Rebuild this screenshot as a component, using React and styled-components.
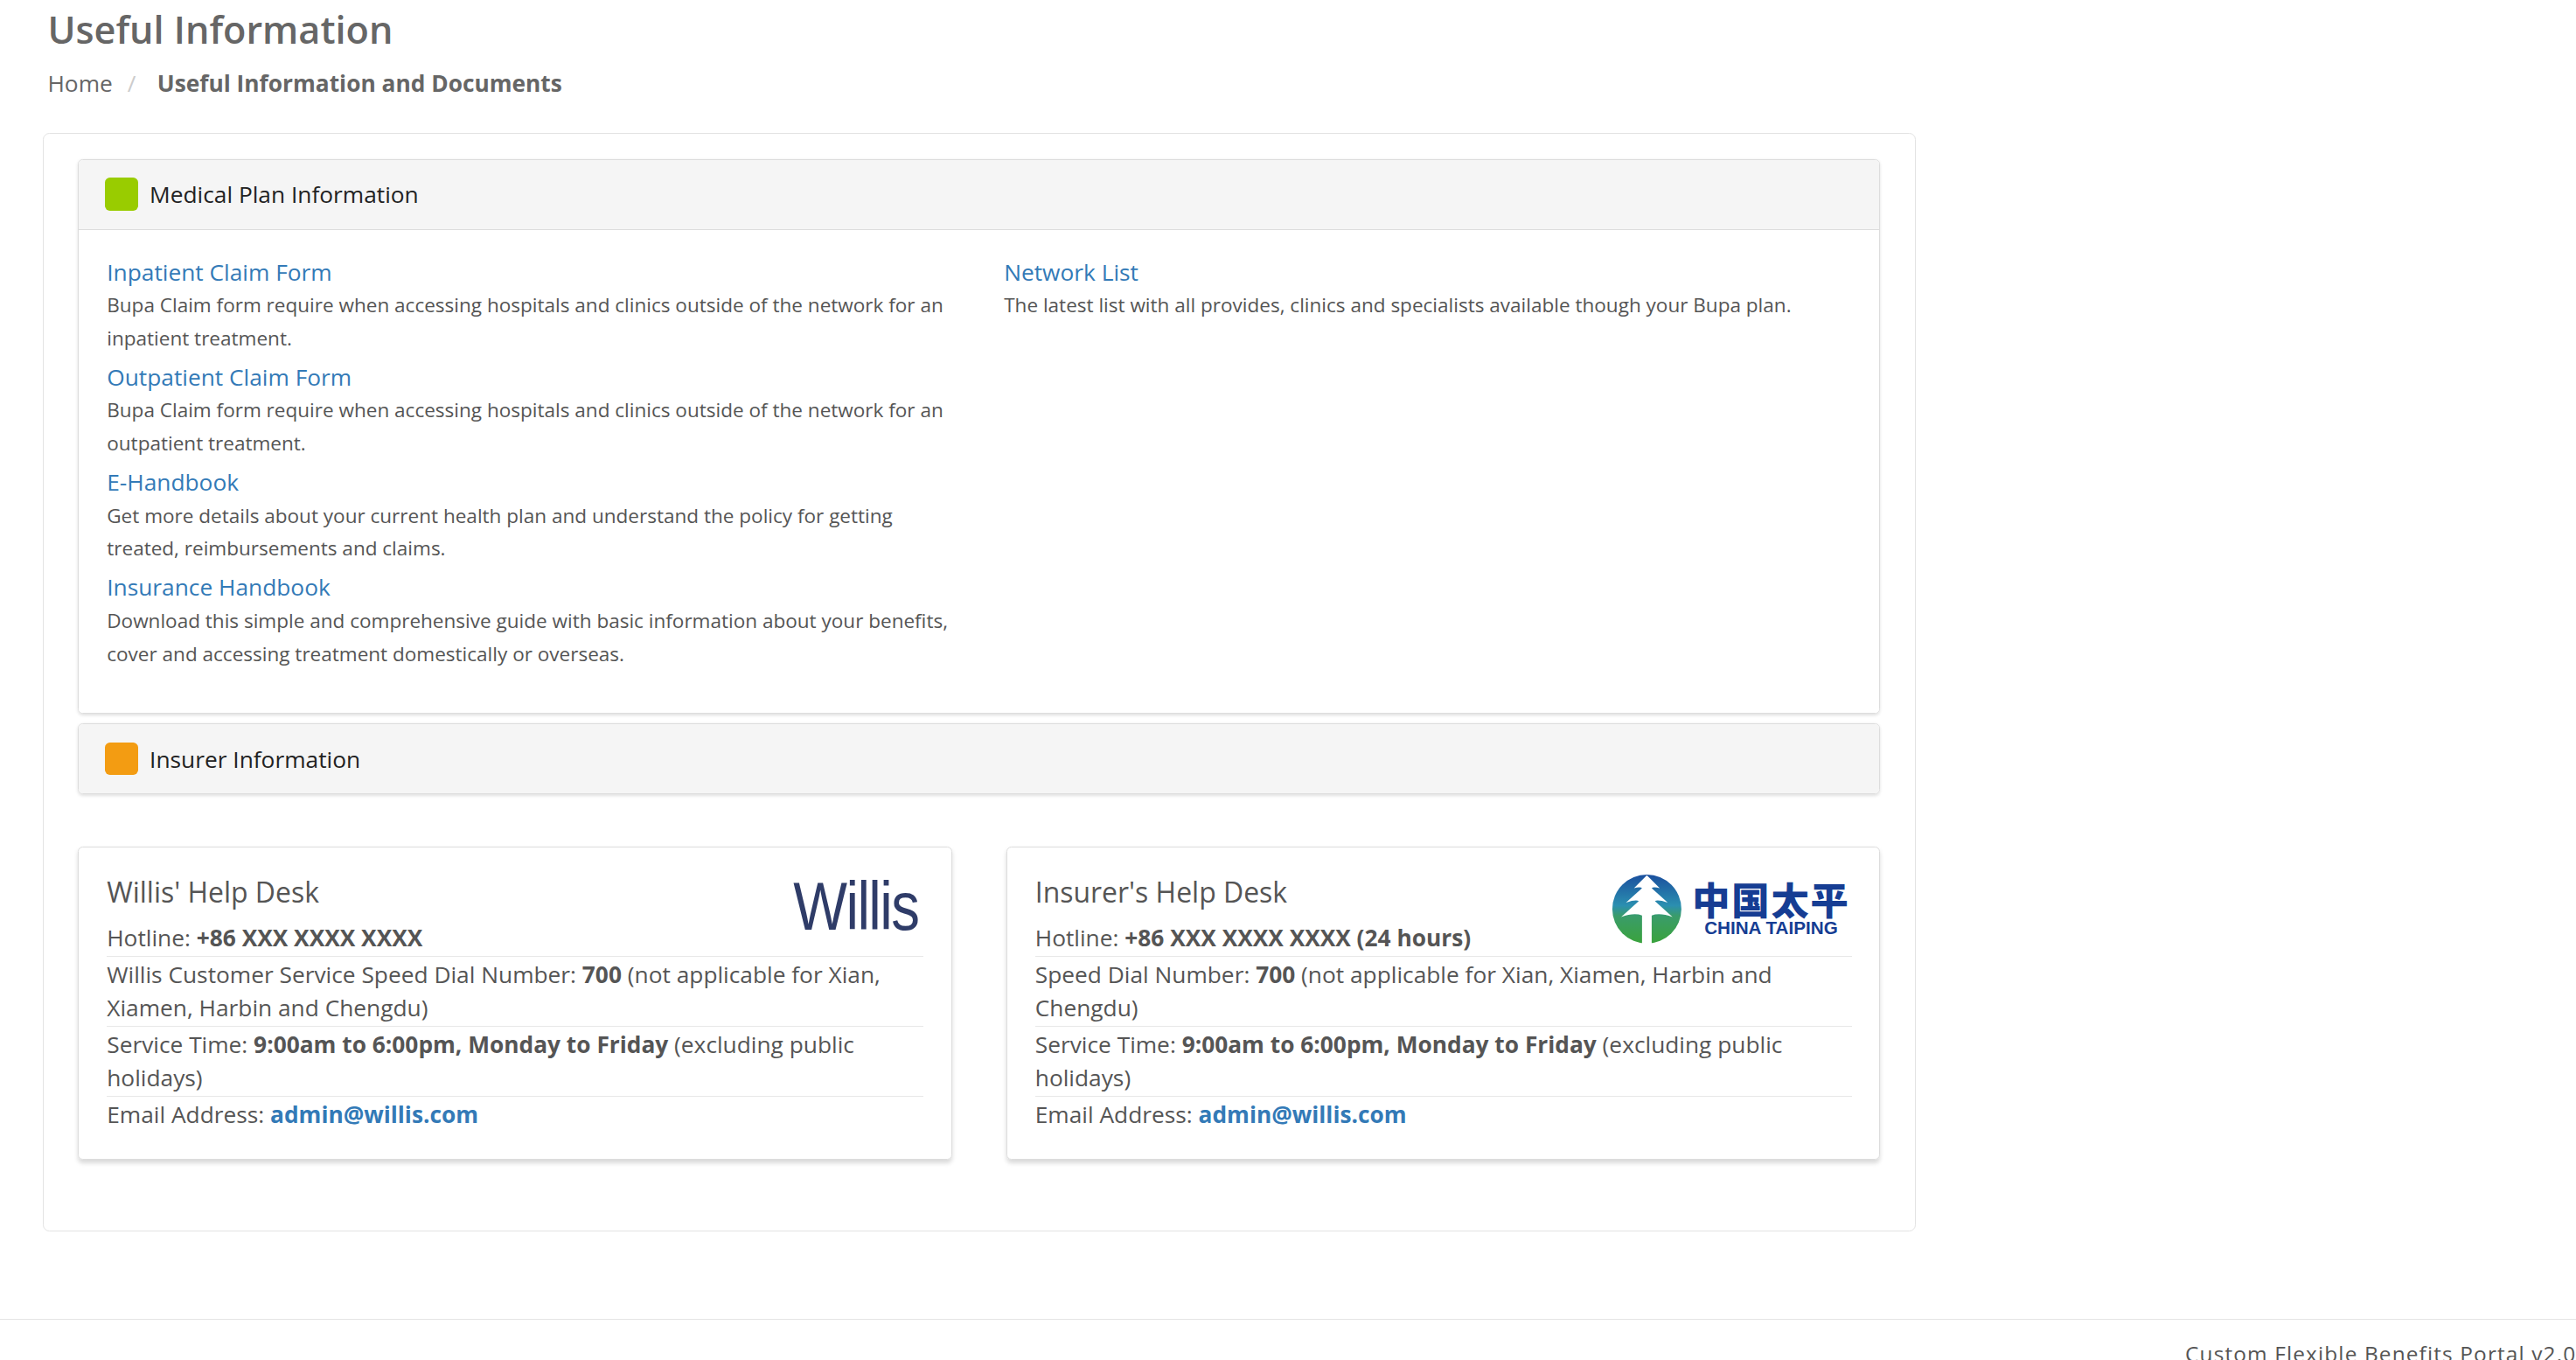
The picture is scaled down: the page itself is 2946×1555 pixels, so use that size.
import React from 'react';
import styled, { createGlobalStyle } from 'styled-components';

const Global = createGlobalStyle`
  html { zoom: 1.879; }
  body {
    margin: 0;
    background: #fff;
    font-family: "Open Sans", "Noto Sans", sans-serif;
    color: #555;
  }
`;

const Page = styled.div`
  width: 1568px;
  min-height: 828px;
  overflow: hidden;
  display: flex;
  flex-direction: column;
`;

const Content = styled.div`
  padding: 0 0 0 26px;
  width: 1140px;
`;

const PageTitle = styled.h1`
  margin: 4px 0 0 3px;
  font-size: 23px;
  font-weight: 600;
  color: #666;
  line-height: 28px;
`;

const Crumbs = styled.div`
  margin: 9px 0 0 3px;
  font-size: 14px;
  color: #666;
  display: flex;
  gap: 9px;
  b { font-weight: 700; margin-left: 4px; }
  span.sep { color: #ccc; }
`;

const Outer = styled.div`
  margin-top: 21px;
  border: 1px solid #e3e3e3;
  border-radius: 4px;
  padding: 15px 21px 43px 21px;
  display: flex;
  flex-direction: column;
  gap: 6px;
`;

const Panel = styled.div`
  border: 1px solid #ddd;
  border-radius: 3px;
  box-shadow: 0 1px 2px rgba(0,0,0,0.12);
  overflow: hidden;
`;

const PanelHead = styled.div`
  height: 42px;
  background: #f5f5f5;
  display: flex;
  align-items: center;
  gap: 7px;
  padding-left: 16px;
  font-size: 14px;
  color: #222;
  border-bottom: ${p => (p.open ? '1px solid #ddd' : 'none')};
`;

const Square = styled.span`
  width: 20px;
  height: 20px;
  border-radius: 3px;
  background: ${p => p.color};
`;

const PanelBody = styled.div`
  display: grid;
  grid-template-columns: 546px 1fr;
  padding: 16px 17px 26px;
  background: #fff;
`;

const Col = styled.div`
  display: flex;
  flex-direction: column;
  gap: 4px;
  max-width: 512px;
`;

const Item = styled.div``;

const Link = styled.a`
  display: block;
  font-size: 14px;
  color: #337ab7;
  line-height: 20px;
  text-decoration: none;
`;

const Desc = styled.p`
  margin: 0;
  font-size: 12px;
  line-height: 20px;
  color: #555;
`;

const Cards = styled.div`
  margin-top: 26px;
  display: grid;
  grid-template-columns: 532px 532px;
  justify-content: space-between;
`;

const Card = styled.div`
  border: 1px solid #ddd;
  border-radius: 3px;
  box-shadow: 0 2px 3px rgba(0,0,0,0.15);
  padding: 16px 17px 16px;
  position: relative;
`;

const CardTitle = styled.h3`
  margin: 0 0 6px;
  font-size: 17px;
  font-weight: 500;
  color: #555;
  line-height: 22px;
`;

const Logo = styled.div`
  position: absolute;
  top: 16px;
  right: 20px;
`;

const Row = styled.div`
  font-size: 14px;
  line-height: 20px;
  color: #555;
  padding: 1px 0;
  border-top: ${p => (p.first ? 'none' : '1px solid #e8e8e8')};
  b { font-weight: 700; }
  a { color: #337ab7; font-weight: 700; text-decoration: none; }
`;

const Footer = styled.div`
  margin-top: 53px;
  border-top: 1px solid #e5e5e5;
  height: 20px;
  position: relative;
`;

const FooterText = styled.div`
  position: absolute;
  left: 1330px;
  top: 12px;
  font-size: 13px;
  color: #555;
  white-space: nowrap;
  letter-spacing: 0.6px;
`;

const WillisLogo = styled.div`
  font-family: "Liberation Sans", sans-serif;
  font-size: 41px;
  font-weight: 300;
  color: #2f3c68;
  letter-spacing: -1px;
  transform: scaleX(0.85);
  transform-origin: right;
  margin-top: -4px;
`;

const CT = styled.div`
  display: flex;
  align-items: center;
  gap: 6px;
  margin-right: -2px;
`;

const CTText = styled.div`
  display: flex;
  flex-direction: column;
  align-items: center;
  color: #163d93;
  .cn { font-family: "Noto Sans CJK SC", sans-serif; font-weight: 900; font-size: 23px; line-height: 23px; letter-spacing: 1px; }
  .en { font-family: "Liberation Sans", sans-serif; font-weight: 700; font-size: 11px; line-height: 13px; }
`;

const TaipingLogo = () => (
  <CT>
    <svg width="43" height="43" viewBox="0 0 44 44">
      <defs>
        <linearGradient id="ctg" x1="0" y1="0" x2="0" y2="1">
          <stop offset="0" stopColor="#1a4f9e" />
          <stop offset="0.45" stopColor="#2b8fb0" />
          <stop offset="0.6" stopColor="#3a9c6a" />
          <stop offset="1" stopColor="#3aa33c" />
        </linearGradient>
      </defs>
      <circle cx="22" cy="22" r="21.5" fill="url(#ctg)" />
      <path d="M22 1 L14 9 Q18 8 19 9 L9 18 Q15 16 17 17 L6 27 Q14 24 19 26 L19 44 L25 44 L25 26 Q30 24 38 27 L27 17 Q29 16 35 18 L25 9 Q26 8 30 9 Z" fill="#fff" />
    </svg>
    <CTText>
      <span className="cn">中国太平</span>
      <span className="en">CHINA TAIPING</span>
    </CTText>
  </CT>
);

const medical = [
  ['Inpatient Claim Form', 'Bupa Claim form require when accessing hospitals and clinics outside of the network for an inpatient treatment.'],
  ['Outpatient Claim Form', 'Bupa Claim form require when accessing hospitals and clinics outside of the network for an outpatient treatment.'],
  ['E-Handbook', 'Get more details about your current health plan and understand the policy for getting treated, reimbursements and claims.'],
  ['Insurance Handbook', 'Download this simple and comprehensive guide with basic information about your benefits, cover and accessing treatment domestically or overseas.'],
];

export default function App() {
  return (
    <Page>
      <Global />
      <Content>
        <PageTitle>Useful Information</PageTitle>
        <Crumbs>
          <span>Home</span>
          <span className="sep">/</span>
          <b>Useful Information and Documents</b>
        </Crumbs>
        <Outer>
          <Panel>
            <PanelHead open>
              <Square color="#99cc00" />
              Medical Plan Information
            </PanelHead>
            <PanelBody>
              <Col>
                {medical.map(([t, d]) => (
                  <Item key={t}>
                    <Link href="#">{t}</Link>
                    <Desc>{d}</Desc>
                  </Item>
                ))}
              </Col>
              <Col>
                <Item>
                  <Link href="#">Network List</Link>
                  <Desc>The latest list with all provides, clinics and specialists available though your Bupa plan.</Desc>
                </Item>
              </Col>
            </PanelBody>
          </Panel>
          <Panel>
            <PanelHead>
              <Square color="#f39c12" />
              Insurer Information
            </PanelHead>
          </Panel>
          <Cards>
            <Card>
              <Logo><WillisLogo>Willis</WillisLogo></Logo>
              <CardTitle>Willis' Help Desk</CardTitle>
              <Row first>Hotline: <b>+86 XXX XXXX XXXX</b></Row>
              <Row>Willis Customer Service Speed Dial Number: <b>700</b> (not applicable for Xian, Xiamen, Harbin and Chengdu)</Row>
              <Row>Service Time: <b>9:00am to 6:00pm, Monday to Friday</b> (excluding public holidays)</Row>
              <Row>Email Address: <a href="#">admin@willis.com</a></Row>
            </Card>
            <Card>
              <Logo><TaipingLogo /></Logo>
              <CardTitle>Insurer's Help Desk</CardTitle>
              <Row first>Hotline: <b>+86 XXX XXXX XXXX (24 hours)</b></Row>
              <Row>Speed Dial Number: <b>700</b> (not applicable for Xian, Xiamen, Harbin and Chengdu)</Row>
              <Row>Service Time: <b>9:00am to 6:00pm, Monday to Friday</b> (excluding public holidays)</Row>
              <Row>Email Address: <a href="#">admin@willis.com</a></Row>
            </Card>
          </Cards>
        </Outer>
      </Content>
      <Footer>
        <FooterText>Custom Flexible Benefits Portal v2.0</FooterText>
      </Footer>
    </Page>
  );
}
